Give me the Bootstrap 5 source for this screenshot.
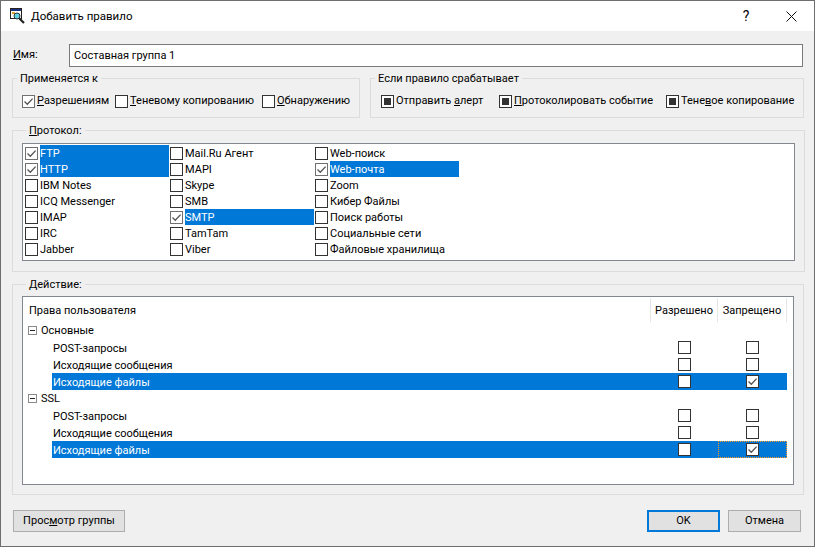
<!DOCTYPE html>
<html lang="ru">
<head>
    <meta charset="UTF-8">
    <meta name="viewport" content="width=device-width, initial-scale=1.0">
    <title>Добавить правило</title>
    <link rel="stylesheet" href="https://cdn.jsdelivr.net/npm/bootstrap@5.3.0/dist/css/bootstrap.min.css">
    <style>
        html, body { height: 100%; }
        body { background: #f0f0f0; font-family: Roboto, "Liberation Sans", sans-serif; font-size: 11px; line-height: 16px; color: #000; overflow: hidden; }
        u { text-underline-offset: 1px; }

        .dlg { width: 815px; height: 547px; border: 1px solid #6e6e6e; }
        .dlg-title { height: 30px; flex: none; background: #fff; padding: 0 0 0 9px; font-size: 11.5px; }
        .dlg-title svg { flex: none; }
        .dlg-name { margin-left: 5px; }
        .dlg-help { width: 14px; text-align: center; font-size: 14px; margin-right: 33px; }
        .dlg-close { margin-right: 17px; }

        .name-row { padding: 13px 11px 0 12px; height: 41px; flex: none; }
        .name-label { width: 56px; line-height: 22px; }
        .name-input { flex: 1; height: 23px; padding: 0 4px; border: 1px solid #7a7a7a; border-radius: 0; font-size: 11px; line-height: 21px; color: #000; }

        .gbox { border: 1px solid #dcdcdc; margin: 0; padding: 0; min-width: 0; flex: none; }
        .gbox > legend { float: none; width: auto; margin: 0 0 0 4px; padding: 0 3px; font-size: 11px; line-height: 13px; height: 12px; }
        .top-groups { padding-left: 11px; gap: 10px; height: 46px; flex: none; }
        .gbox-apply { width: 348px; height: 46px; }
        .gbox-react { width: 434px; height: 46px; }
        .check-row { padding: 9px 0 0 9px; }
        .gbox-react .check-row { padding-left: 10px; }

        .cb { appearance: none; -webkit-appearance: none; display: block; flex: none; width: 13px; height: 13px; margin: 0 2px 0 0; border: 1px solid #333; border-radius: 0; background: #fff center / 11px 11px no-repeat; }
        .cb.on { background-image: url("data:image/svg+xml,%3Csvg xmlns='http://www.w3.org/2000/svg' viewBox='0 0 11 11'%3E%3Cpath d='M1.5 5.5 4.3 8.3 9.6 2.6' fill='none' stroke='%23555' stroke-width='1.3'/%3E%3C/svg%3E"); }
        .cb.dim { border-color: #707070; }
        .cb.fill { background-color: #333; box-shadow: inset 0 0 0 2px #fff; }
        .check-item { display: flex; align-items: center; white-space: nowrap; flex: none; margin: 0; line-height: 18px; height: 16px; }
        .gap-r1 { width: 93px; } .gap-r2 { width: 147px; } .gap-r3 { width: 88px; }
        .gap-s1 { width: 118px; } .gap-s2 { width: 167px; } .gap-s3 { width: 128px; }

        .gbox-proto { margin: 6px 9px 0 11px; height: 148px; padding: 0 9px; }
        .proto-list { margin-top: 7px; height: 118px; background: #fff; border: 1px solid #828790; padding: 1px 2px; display: grid; grid-template-rows: repeat(7, 16px); grid-template-columns: repeat(3, 145px); grid-auto-flow: column; }
        .proto-item { display: flex; align-items: center; height: 16px; margin: 0; }
        .proto-item span { flex: 0 0 129px; height: 16px; line-height: 18px; white-space: nowrap; }
        .picked { background: #0078d7; color: #fff; }

        .gbox-action { margin: 6px 10px 0 11px; height: 217px; padding: 0 9px; }
        .rights { margin-top: 6px; height: 189px; background: #fff; border: 1px solid #828790; }
        .rights-table { table-layout: fixed; width: 764px; margin: 0; border-collapse: collapse; color: #000; }
        .rights-table th, .rights-table td { padding: 0; height: 17px; line-height: 19px; font-weight: 400; border: 0; background: transparent; color: inherit; box-shadow: none; vertical-align: middle; }
        .rights-table .head-row th { height: 25px; vertical-align: top; padding-top: 1px; }
        .h-cell { display: flex; align-items: center; height: 24px; padding-left: 6px; }
        .h-sep { border-right: 1px solid #e5e5e5; }
        .h-center { justify-content: center; padding-left: 0; }
        .grp { display: flex; align-items: center; height: 17px; padding-left: 5px; }
        .tree-btn { width: 9px; height: 9px; flex: none; margin-right: 4px; }
        .rights-table td.child-cell { padding-left: 29px; }
        .child-name { height: 17px; padding-left: 1px; }
        .rights-table tr.sel .child-name { background: #0078d7; color: #fff; }
        .rights-table tr.sel td.cell-chk { background: #0078d7; }
        .cell-chk .cb { margin: 0 auto; }
        .rights-table td.focus-cell { outline: 1px dotted #ff9a1f; outline-offset: -1px; }

        .bottom-row { padding: 15px 13px 0 12px; flex: none; }
        .win-btn { height: 22px; background: #e1e1e1; border: 1px solid #adadad; border-radius: 0; font-size: 11px; line-height: 20px; padding: 0; color: #000; }
        .win-btn:hover { background: #e1e1e1; border-color: #adadad; color: #000; }
        .btn-view { width: 112px; }
        .btn-ok { width: 73px; border: 2px solid #0078d7; margin-right: 8px; line-height: 18px; }
        .btn-ok:hover { border-color: #0078d7; }
        .btn-cancel { width: 73px; }
    </style>
</head>
<body>

<div class="dlg d-flex flex-column">
    <div class="dlg-title d-flex align-items-center">
        <svg width="16" height="16" viewBox="0 0 16 16">
            <rect x="0.5" y="0.5" width="11" height="10" fill="#fff" stroke="#222"/>
            <rect x="1" y="1" width="10" height="2" fill="#1c2f7a"/>
            <rect x="2" y="4" width="3" height="2" fill="#e0a030"/>
            <path d="M9 10l5 5" stroke="#222" stroke-width="2.2"/>
            <circle cx="7" cy="8" r="3" fill="#5fd3e6" stroke="#333"/>
        </svg>
        <span class="dlg-name flex-grow-1">Добавить правило</span>
        <span class="dlg-help">?</span>
        <svg class="dlg-close" width="11" height="11" viewBox="0 0 11 11"><path d="M.5.5l10 10M10.5.5l-10 10" stroke="#111" fill="none"/></svg>
    </div>

    <div class="name-row d-flex align-items-start">
        <label class="name-label"><u>И</u>мя:</label>
        <input class="name-input" type="text" value="Составная группа 1">
    </div>

    <div class="top-groups d-flex">
        <fieldset class="gbox gbox-apply">
            <legend>Применяется к</legend>
            <div class="check-row d-flex">
                <label class="check-item gap-r1"><input class="cb on dim" type="checkbox" checked><span><u>Р</u>азрешениям</span></label>
                <label class="check-item gap-r2"><input class="cb" type="checkbox"><span><u>Т</u>еневому копированию</span></label>
                <label class="check-item gap-r3"><input class="cb" type="checkbox"><span><u>О</u>бнаружению</span></label>
            </div>
        </fieldset>
        <fieldset class="gbox gbox-react">
            <legend>Если правило срабатывает</legend>
            <div class="check-row d-flex">
                <label class="check-item gap-s1"><input class="cb fill" type="checkbox"><span>Отправить <u>а</u>лерт</span></label>
                <label class="check-item gap-s2"><input class="cb fill" type="checkbox"><span><u>П</u>ротоколировать событие</span></label>
                <label class="check-item gap-s3"><input class="cb fill" type="checkbox"><span>Тене<u>в</u>ое копирование</span></label>
            </div>
        </fieldset>
    </div>

    <fieldset class="gbox gbox-proto">
        <legend><u>П</u>ротокол:</legend>
        <div class="proto-list" id="protoList"></div>
    </fieldset>

    <fieldset class="gbox gbox-action">
        <legend><u>Д</u>ействие:</legend>
        <div class="rights">
            <table class="table table-borderless rights-table">
                <colgroup><col style="width:628px"><col style="width:67px"><col style="width:69px"></colgroup>
                <thead>
                    <tr class="head-row">
                        <th><div class="h-cell h-sep">Права пользователя</div></th>
                        <th><div class="h-cell h-center h-sep">Разрешено</div></th>
                        <th><div class="h-cell h-center h-sep">Запрещено</div></th>
                    </tr>
                </thead>
                <tbody id="rightsBody"></tbody>
            </table>
        </div>
    </fieldset>

    <div class="bottom-row d-flex">
        <button class="btn win-btn btn-view me-auto">Прос<u>м</u>отр группы</button>
        <button class="btn win-btn btn-ok">OK</button>
        <button class="btn win-btn btn-cancel">Отмена</button>
    </div>
</div>

<script src="https://cdn.jsdelivr.net/npm/bootstrap@5.3.0/dist/js/bootstrap.bundle.min.js"></script>
<script>
    const protocols = [
        ["FTP", 1], ["HTTP", 1], ["IBM Notes", 0], ["ICQ Messenger", 0], ["IMAP", 0], ["IRC", 0], ["Jabber", 0],
        ["Mail.Ru Агент", 0], ["MAPI", 0], ["Skype", 0], ["SMB", 0], ["SMTP", 1], ["TamTam", 0], ["Viber", 0],
        ["Web-поиск", 0], ["Web-почта", 1], ["Zoom", 0], ["Кибер Файлы", 0], ["Поиск работы", 0], ["Социальные сети", 0], ["Файловые хранилища", 0]
    ];
    document.getElementById('protoList').innerHTML = protocols.map(function (p) {
        return '<label class="proto-item"><input class="cb' + (p[1] ? ' on dim' : '') + '" type="checkbox"' + (p[1] ? ' checked' : '') + '>' +
            '<span' + (p[1] ? ' class="picked"' : '') + '>' + p[0] + '</span></label>';
    }).join('');

    const treeBtn = '<svg class="tree-btn" viewBox="0 0 9 9"><rect x=".5" y=".5" width="8" height="8" fill="#fff" stroke="#8a8a8a"/><path d="M2 4.5h5" stroke="#222"/></svg>';
    function childRows(last) {
        const names = ["POST-запросы", "Исходящие сообщения", "Исходящие файлы"];
        return names.map(function (name, i) {
            const sel = i === 2;
            return '<tr' + (sel ? ' class="sel"' : '') + '><td class="child-cell"><div class="child-name">' + name + '</div></td>' +
                '<td class="cell-chk"><input class="cb" type="checkbox"></td>' +
                '<td class="cell-chk' + (sel && last ? ' focus-cell' : '') + '"><input class="cb' + (sel ? ' on' : '') + '" type="checkbox"' + (sel ? ' checked' : '') + '></td></tr>';
        }).join('');
    }
    function groupRow(name) {
        return '<tr><td colspan="3"><div class="grp">' + treeBtn + name + '</div></td></tr>';
    }
    document.getElementById('rightsBody').innerHTML =
        groupRow('Основные') + childRows(false) + groupRow('SSL') + childRows(true);
</script>
</body>
</html>
